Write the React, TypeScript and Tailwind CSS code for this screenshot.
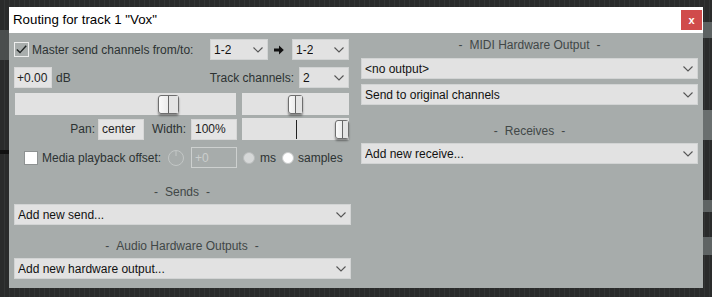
import React from "react";

const FONT = { fontFamily: '"Liberation Sans", Arial, sans-serif' };

function Chevron() {
  return (
    <svg width="10" height="6" viewBox="0 0 10 6" className="shrink-0">
      <path d="M0.5 0.5 L5 5 L9.5 0.5" fill="none" stroke="#555" strokeWidth="1.1" />
    </svg>
  );
}

function Select({ label, className = "" }: { label: string; className?: string }) {
  return (
    <div
      className={`flex h-[21px] items-center justify-between border border-[#d2d4d4] bg-[#e2e2e2] pl-[3px] pr-[4px] text-[12px] text-[#111] ${className}`}
    >
      <span className="truncate">{label}</span>
      <Chevron />
    </div>
  );
}

function Thumb({ className = "" }: { className?: string }) {
  return (
    <div
      className={`absolute top-[2px] flex h-[19px] rounded-[3px] border border-[#6e6e6e] bg-gradient-to-r from-[#fafafa] to-[#dcdcdc] shadow-[0_2px_2px_rgba(0,0,0,0.4)] ${className}`}
    >
      <div className="flex-1" />
      <div className="w-px bg-[#666]" />
      <div className="flex-1 bg-[#e4e4e4]" />
    </div>
  );
}

function SectionLabel({ text, className = "" }: { text: string; className?: string }) {
  return (
    <div className={`flex h-[16px] items-center justify-center text-[12px] text-[#414747] ${className}`}>
      <span>-</span>
      <span className="mx-[7px]">{text}</span>
      <span>-</span>
    </div>
  );
}

export default function App() {
  return (
    <div
      style={FONT}
      className="relative h-[297px] w-[712px] overflow-hidden bg-[#2a2b2b] bg-[repeating-linear-gradient(90deg,#2a2b2b_0px,#2a2b2b_4px,#333535_4px,#333535_5px)] pl-[9px] pt-[7px]"
    >
      {/* background track bits */}
      <div className="absolute left-0 top-[30px] h-[30px] w-[9px] bg-[#4a4e4e]" />
      <div className="absolute left-0 top-[150px] h-[4px] w-[9px] bg-[#111]" />
      <div className="absolute right-0 top-[22px] h-[16px] w-[9px] bg-[#5d6262]" />
      <div className="absolute right-0 top-[110px] h-[30px] w-[9px] bg-[#6a6f6f]" />
      <div className="absolute right-0 top-[200px] h-[12px] w-[9px] bg-[#5f6464]" />
      <div className="absolute right-0 top-[237px] h-[18px] w-[9px] bg-[#5f6464]" />

      <div className="relative flex h-[281px] w-[694px] flex-col">
        {/* Title bar */}
        <div className="flex h-[26px] shrink-0 items-center justify-between bg-white pl-[4px] pr-[1px]">
          <span className="text-[13.3px] text-black">Routing for track 1 "Vox"</span>
          <div className="flex h-[20px] w-[21px] items-center justify-center bg-[#d04b4b] text-[11px] font-bold text-white">
            x
          </div>
        </div>

        {/* Content */}
        <div className="flex flex-1 bg-[#a7acab] pl-[5px] text-[12px] text-[#2c3232]">
          {/* Left column */}
          <div className="flex w-[336px] flex-col">
            {/* Row 1 */}
            <div className="mt-[6px] flex h-[21px] items-center">
              <div className="flex h-[15px] w-[15px] items-center justify-center border border-[#eeeeee] bg-[#a9aead]">
                <svg width="11" height="9" viewBox="0 0 11 9">
                  <path d="M0.8 4.5 L4 7.6 L10.2 0.8" fill="none" stroke="#1e2222" strokeWidth="1.4" />
                </svg>
              </div>
              <span className="ml-[3px]">Master send channels from/to:</span>
              <div className="flex-1" />
              <Select label="1-2" className="w-[58px]" />
              <svg width="10" height="10" viewBox="0 0 10 10" className="ml-[6px] mr-[8px]">
                <path d="M0 3.5 H5 V0.5 L9.8 5 L5 9.5 V6.5 H0 Z" fill="#111" />
              </svg>
              <Select label="1-2" className="mr-[1px] w-[57px]" />
            </div>

            {/* Row 2 */}
            <div className="mt-[7px] flex h-[21px] items-center">
              <div className="flex h-[21px] w-[38px] items-center border border-[#d8d8d8] bg-[#e4e4e4] pl-[2px] text-[#222]">
                +0.00
              </div>
              <span className="ml-[4px]">dB</span>
              <div className="flex-1" />
              <span className="mr-[5px]">Track channels:</span>
              <Select label="2" className="mr-[1px] w-[50px]" />
            </div>

            {/* Row 3 - sliders */}
            <div className="mt-[5px] flex h-[22px]">
              <div className="relative ml-[1px] h-[22px] w-[221px] bg-[#e2e2e2]">
                <Thumb className="left-[143px] w-[21px]" />
              </div>
              <div className="relative ml-[6px] h-[22px] w-[107px] bg-[#e2e2e2]">
                <Thumb className="left-[46px] w-[15px]" />
              </div>
            </div>

            {/* Row 4 */}
            <div className="mt-[3px] flex h-[22px] items-center">
              <span className="w-[84px] pr-[3px] text-right">Pan:</span>
              <div className="flex h-[21px] w-[46px] items-center border border-[#d8d8d8] bg-[#e4e4e4] pl-[3px] text-[#222]">
                center
              </div>
              <span className="w-[47px] pr-[5px] text-right">Width:</span>
              <div className="flex h-[21px] w-[46px] items-center border border-[#d8d8d8] bg-[#e4e4e4] pl-[3px] text-[#222]">
                100%
              </div>
              <div className="relative ml-[5px] h-[22px] w-[107px] bg-[#e2e2e2]">
                <div className="absolute left-[54px] top-[2px] h-[19px] w-px bg-[#222]" />
                <Thumb className="left-[93px] w-[14px]" />
              </div>
            </div>

            {/* Row 5 */}
            <div className="mt-[7px] flex h-[21px] items-center">
              <div className="ml-[10px] h-[14px] w-[14px] border border-[#8e9292] bg-white" />
              <span className="ml-[4px] w-[125px]">Media playback offset:</span>
              <svg width="18" height="18" viewBox="0 0 18 18" className="shrink-0">
                <circle cx="9" cy="9" r="7.5" fill="none" stroke="#c3c7c6" strokeWidth="1" />
                <line x1="9" y1="2" x2="9" y2="7" stroke="#c3c7c6" strokeWidth="1" />
              </svg>
              <div className="ml-[6px] flex h-[21px] w-[46px] items-center border border-[#cdd0cf] pl-[3px] text-[#cbcecd]">
                +0
              </div>
              <div className="ml-[6px] h-[12px] w-[12px] rounded-full border border-[#b9bcbc] bg-[#d6d8d8]" />
              <span className="ml-[5px] w-[22px]">ms</span>
              <div className="h-[12px] w-[12px] rounded-full border border-[#c9cbcb] bg-white" />
              <span className="ml-[4px]">samples</span>
            </div>

            <SectionLabel text="Sends" className="mt-[16px]" />
            <Select label="Add new send..." className="mt-[4px] w-[337px]" />

            <SectionLabel text="Audio Hardware Outputs" className="mt-[13px]" />
            <Select label="Add new hardware output..." className="mt-[4px] w-[337px]" />
          </div>

          {/* Right column */}
          <div className="ml-[11px] flex w-[337px] flex-col">
            <SectionLabel text="MIDI Hardware Output" className="mt-[4px]" />
            <Select label="<no output>" className="mt-[5px]" />
            <Select label="Send to original channels" className="mt-[5px]" />
            <SectionLabel text="Receives" className="mt-[18px]" />
            <Select label="Add new receive..." className="mt-[4px]" />
          </div>
        </div>
      </div>
    </div>
  );
}
